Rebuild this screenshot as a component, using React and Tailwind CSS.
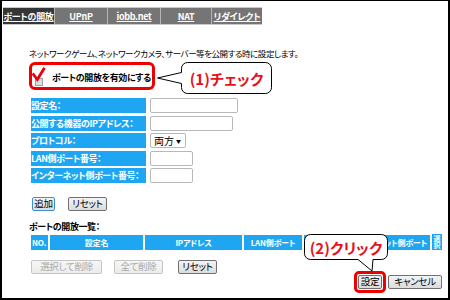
const tabs = [
  { label: "UPnP", w: "w-[53px]" },
  { label: "iobb.net", w: "w-[53px]" },
  { label: "NAT", w: "w-[51px]" },
  { label: "リダイレクト", w: "w-[51px]" },
];

const rows = [
  { label: "設定名：", field: <input className="w-[88px] h-[15px] border border-[#b8b8b8] rounded-[2px] bg-white" /> },
  { label: "公開する機器のIPアドレス：", field: <input className="w-[83px] h-[15px] border border-[#b8b8b8] rounded-[2px] bg-white" /> },
  {
    label: "プロトコル：",
    field: (
      <div className="w-[36px] h-[15px] border border-[#b8b8b8] rounded-[2px] bg-white flex items-center justify-between pl-[3px] pr-[4px] text-[10px] leading-none">
        <span>両方</span>
        <span className="text-[5px]">▼</span>
      </div>
    ),
  },
  { label: "LAN側ポート番号：", field: <input className="w-[43px] h-[15px] border border-[#b8b8b8] rounded-[2px] bg-white" /> },
  { label: "インターネット側ポート番号：", field: <input className="w-[43px] h-[15px] border border-[#b8b8b8] rounded-[2px] bg-white" /> },
];

function Btn({ children, w, disabled, focus }) {
  return (
    <div
      className={`${w} h-[14px] rounded-[2px] border flex items-center justify-center text-[9.5px] tracking-[-0.3px] leading-none whitespace-nowrap bg-gradient-to-b ${
        disabled
          ? "border-[#c4c4c4] from-[#f6f6f6] to-[#ececec] text-[#a8a8a8]"
          : focus
          ? "border-[#3d8fd0] from-[#f4f4f4] to-[#dcdcdc] text-black"
          : "border-[#707070] from-[#f4f4f4] to-[#dcdcdc] text-black"
      }`}
    >
      {children}
    </div>
  );
}

export default function App() {
  return (
    <div className="w-[450px] h-[300px] relative overflow-hidden bg-white border-black border-t border-l-2 border-r-2 border-b-2 font-['Noto_Sans_CJK_JP',sans-serif] [font-feature-settings:'palt'] text-black">
      {/* tab bar */}
      <div className="mt-[6px] ml-[1px] w-[259px] h-[18px] flex bg-[#757575] border-y border-[#c9c9c9] text-white font-bold text-[9px] tracking-[-0.3px] leading-none whitespace-nowrap">
        <div className="w-[51px] h-full bg-[#363636] flex items-center justify-center underline">ポートの開放</div>
        {tabs.map((t) => (
          <div key={t.label} className={`${t.w} h-full border-l border-[#b5b5b5] flex items-center justify-center underline`}>
            {t.label}
          </div>
        ))}
      </div>

      <div className="pl-[27px]">
        <p className="mt-[22px] h-[12px] text-[8.5px] leading-[12px] tracking-[-0.45px] whitespace-nowrap">
          ネットワークゲーム、ネットワークカメラ、サーバー等を公開する時に設定します。
        </p>

        {/* enable checkbox, red annotation box */}
        <div className="mt-[3px] w-[126px] h-[28px] border-[3px] border-[#ee0000] rounded-[6px] flex items-center pt-[2px]">
          <svg width="14" height="20" viewBox="0 0 14 20" className="shrink-0">
            <rect x="3.5" y="11.5" width="7" height="7" fill="#dcdcdc" stroke="#a0a0a0" />
            <path d="M1.5 7.5 L5.3 12.5 L11.8 2" fill="none" stroke="#e60012" strokeWidth="2.8" strokeLinecap="square" />
          </svg>
          <span className="ml-[6px] text-[9px] tracking-[-0.4px] font-bold leading-none whitespace-nowrap">ポートの開放を有効にする</span>
        </div>

        {/* form rows */}
        <div className="mt-[8px] ml-[2px] flex flex-col gap-[2.5px]">
          {rows.map((r) => (
            <div key={r.label} className="flex items-center h-[15px]">
              <div className="w-[115px] h-[15px] bg-[#1fa6f2] text-white font-bold text-[9px] tracking-[-0.4px] leading-[15px] whitespace-nowrap">{r.label}</div>
              <div className="ml-[4px]">{r.field}</div>
            </div>
          ))}
        </div>

        <div className="mt-[14px] ml-[3px] flex gap-[13px]">
          <Btn w="w-[23px]" focus>追加</Btn>
          <Btn w="w-[39px]">リセット</Btn>
        </div>

        <p className="mt-[10px] text-[9px] tracking-[-0.4px] leading-[12px] font-bold">ポートの開放一覧：</p>

        {/* list header */}
        <div className="mt-[2px] ml-[2px] flex items-start gap-[2px] h-[15px] text-white font-bold text-[8px] tracking-[-0.2px] leading-none whitespace-nowrap">
          <div className="w-[17px] h-[15px] bg-[#1fa6f2] flex items-center pl-[1px]">NO.</div>
          <div className="w-[93px] h-[15px] bg-[#1fa6f2] flex items-center justify-center">設定名</div>
          <div className="w-[97px] h-[15px] bg-[#1fa6f2] flex items-center justify-center">IPアドレス</div>
          <div className="w-[58px] h-[15px] bg-[#1fa6f2] flex items-center justify-center">LAN側ポート</div>
          <div className="w-[126px] h-[15px] bg-[#1fa6f2] flex items-center justify-end pr-[3px]">インターネット側ポート</div>
          <div className="w-[10px] h-[16px] -mt-[1px] bg-[#1fa6f2] flex items-center justify-center overflow-hidden">
            <span className="[writing-mode:vertical-rl] text-[7px] leading-[10px] tracking-normal">選択</span>
          </div>
        </div>

        <div className="mt-[10px] ml-[2px] flex">
          <Btn w="w-[71px]" disabled>選択して削除</Btn>
          <div className="ml-[12px]">
            <Btn w="w-[49px]" disabled>全て削除</Btn>
          </div>
          <div className="ml-[15px]">
            <Btn w="w-[39px]">リセット</Btn>
          </div>
        </div>
      </div>

      <div className="mt-[1px] mr-[6px] flex justify-end gap-[6px]">
        <Btn w="w-[24px]">設定</Btn>
        <Btn w="w-[54px]">キャンセル</Btn>
      </div>

      {/* red highlight around 設定 */}
      <div className="absolute left-[352px] top-[270px] w-[32px] h-[22px] border-[3px] border-[#ee0000] rounded-[5px]" />

      {/* callout (1) */}
      <div className="absolute left-[154px] top-[60px] w-[118px] h-[34px]">
        <svg width="118" height="34" viewBox="0 0 118 34" className="absolute inset-0">
          <path
            d="M31.5 1.5 H109.5 A6 6 0 0 1 115.5 7.5 V26.5 A6 6 0 0 1 109.5 32.5 H31.5 A6 6 0 0 1 25.5 26.5 V22.5 L1.5 17 L25.5 11.5 V7.5 A6 6 0 0 1 31.5 1.5 Z"
            fill="#fff"
            stroke="#000"
          />
        </svg>
        <div className="absolute left-[25px] top-0 w-[91px] h-[34px] flex items-center justify-center text-[15px] font-bold text-[#e8101a] leading-none whitespace-nowrap">
          (1)チェック
        </div>
      </div>

      {/* callout (2) */}
      <div className="absolute left-[301px] top-[232px] w-[86px] h-[40px]">
        <svg width="86" height="40" viewBox="0 0 86 40" className="absolute inset-0">
          <path
            d="M7.5 1.5 H78.5 A6 6 0 0 1 84.5 7.5 V20.5 A6 6 0 0 1 78.5 26.5 H70 L69 38 L55 26.5 H7.5 A6 6 0 0 1 1.5 20.5 V7.5 A6 6 0 0 1 7.5 1.5 Z"
            fill="#fff"
            stroke="#000"
          />
        </svg>
        <div className="absolute left-0 top-0 w-[86px] h-[28px] flex items-center justify-center text-[15px] font-bold text-[#e8101a] leading-none whitespace-nowrap">
          (2)クリック
        </div>
      </div>
    </div>
  );
}
